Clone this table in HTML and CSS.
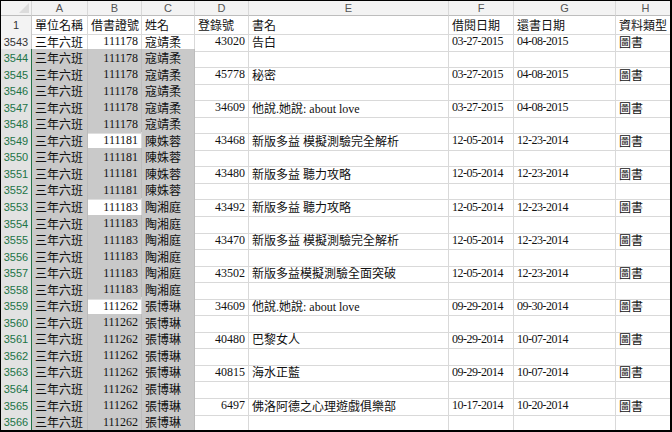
FILE: index.html
```html
<!DOCTYPE html>
<html lang="zh-Hant">
<head>
<meta charset="utf-8">
<title>Sheet</title>
<link rel="stylesheet" href="styles.css">
</head>
<body>
<div class="sheet">
  <div class="row colhead">
    <div class="corner"><span class="tri"></span></div>
    <div class="ch">A</div><div class="ch">B</div><div class="ch">C</div><div class="ch">D</div><div class="ch">E</div><div class="ch">F</div><div class="ch">G</div><div class="ch">H</div>
  </div>
  <div class="row">
    <div class="rh">1</div>
    <div class="c">單位名稱</div><div class="c">借書證號</div><div class="c">姓名</div><div class="c">登錄號</div><div class="c">書名</div><div class="c">借閱日期</div><div class="c">還書日期</div><div class="c">資料類型</div>
  </div>
  <div class="row">
    <div class="rh">3543</div>
    <div class="c">三年六班</div><div class="c n">111178</div><div class="c">寇靖柔</div><div class="c n">43020</div><div class="c">告白</div><div class="c d">03-27-2015</div><div class="c d">04-08-2015</div><div class="c">圖書</div>
  </div>
  <div class="row sel">
    <div class="rh">3544</div>
    <div class="c s">三年六班</div><div class="c n s">111178</div><div class="c s">寇靖柔</div><div class="c n"></div><div class="c"></div><div class="c d"></div><div class="c d"></div><div class="c"></div>
  </div>
  <div class="row sel">
    <div class="rh">3545</div>
    <div class="c s">三年六班</div><div class="c n s">111178</div><div class="c s">寇靖柔</div><div class="c n">45778</div><div class="c">秘密</div><div class="c d">03-27-2015</div><div class="c d">04-08-2015</div><div class="c">圖書</div>
  </div>
  <div class="row sel">
    <div class="rh">3546</div>
    <div class="c s">三年六班</div><div class="c n s">111178</div><div class="c s">寇靖柔</div><div class="c n"></div><div class="c"></div><div class="c d"></div><div class="c d"></div><div class="c"></div>
  </div>
  <div class="row sel">
    <div class="rh">3547</div>
    <div class="c s">三年六班</div><div class="c n s">111178</div><div class="c s">寇靖柔</div><div class="c n">34609</div><div class="c">他說.她說: about love</div><div class="c d">03-27-2015</div><div class="c d">04-08-2015</div><div class="c">圖書</div>
  </div>
  <div class="row sel">
    <div class="rh">3548</div>
    <div class="c s">三年六班</div><div class="c n s">111178</div><div class="c s">寇靖柔</div><div class="c n"></div><div class="c"></div><div class="c d"></div><div class="c d"></div><div class="c"></div>
  </div>
  <div class="row sel">
    <div class="rh">3549</div>
    <div class="c s">三年六班</div><div class="c n">111181</div><div class="c s">陳姝蓉</div><div class="c n">43468</div><div class="c">新版多益 模擬測驗完全解析</div><div class="c d">12-05-2014</div><div class="c d">12-23-2014</div><div class="c">圖書</div>
  </div>
  <div class="row sel">
    <div class="rh">3550</div>
    <div class="c s">三年六班</div><div class="c n s">111181</div><div class="c s">陳姝蓉</div><div class="c n"></div><div class="c"></div><div class="c d"></div><div class="c d"></div><div class="c"></div>
  </div>
  <div class="row sel">
    <div class="rh">3551</div>
    <div class="c s">三年六班</div><div class="c n s">111181</div><div class="c s">陳姝蓉</div><div class="c n">43480</div><div class="c">新版多益 聽力攻略</div><div class="c d">12-05-2014</div><div class="c d">12-23-2014</div><div class="c">圖書</div>
  </div>
  <div class="row sel">
    <div class="rh">3552</div>
    <div class="c s">三年六班</div><div class="c n s">111181</div><div class="c s">陳姝蓉</div><div class="c n"></div><div class="c"></div><div class="c d"></div><div class="c d"></div><div class="c"></div>
  </div>
  <div class="row sel">
    <div class="rh">3553</div>
    <div class="c s">三年六班</div><div class="c n">111183</div><div class="c s">陶湘庭</div><div class="c n">43492</div><div class="c">新版多益 聽力攻略</div><div class="c d">12-05-2014</div><div class="c d">12-23-2014</div><div class="c">圖書</div>
  </div>
  <div class="row sel">
    <div class="rh">3554</div>
    <div class="c s">三年六班</div><div class="c n s">111183</div><div class="c s">陶湘庭</div><div class="c n"></div><div class="c"></div><div class="c d"></div><div class="c d"></div><div class="c"></div>
  </div>
  <div class="row sel">
    <div class="rh">3555</div>
    <div class="c s">三年六班</div><div class="c n s">111183</div><div class="c s">陶湘庭</div><div class="c n">43470</div><div class="c">新版多益 模擬測驗完全解析</div><div class="c d">12-05-2014</div><div class="c d">12-23-2014</div><div class="c">圖書</div>
  </div>
  <div class="row sel">
    <div class="rh">3556</div>
    <div class="c s">三年六班</div><div class="c n s">111183</div><div class="c s">陶湘庭</div><div class="c n"></div><div class="c"></div><div class="c d"></div><div class="c d"></div><div class="c"></div>
  </div>
  <div class="row sel">
    <div class="rh">3557</div>
    <div class="c s">三年六班</div><div class="c n s">111183</div><div class="c s">陶湘庭</div><div class="c n">43502</div><div class="c">新版多益模擬測驗全面突破</div><div class="c d">12-05-2014</div><div class="c d">12-23-2014</div><div class="c">圖書</div>
  </div>
  <div class="row sel">
    <div class="rh">3558</div>
    <div class="c s">三年六班</div><div class="c n s">111183</div><div class="c s">陶湘庭</div><div class="c n"></div><div class="c"></div><div class="c d"></div><div class="c d"></div><div class="c"></div>
  </div>
  <div class="row sel">
    <div class="rh">3559</div>
    <div class="c s">三年六班</div><div class="c n">111262</div><div class="c s">張博琳</div><div class="c n">34609</div><div class="c">他說.她說: about love</div><div class="c d">09-29-2014</div><div class="c d">09-30-2014</div><div class="c">圖書</div>
  </div>
  <div class="row sel">
    <div class="rh">3560</div>
    <div class="c s">三年六班</div><div class="c n s">111262</div><div class="c s">張博琳</div><div class="c n"></div><div class="c"></div><div class="c d"></div><div class="c d"></div><div class="c"></div>
  </div>
  <div class="row sel">
    <div class="rh">3561</div>
    <div class="c s">三年六班</div><div class="c n s">111262</div><div class="c s">張博琳</div><div class="c n">40480</div><div class="c">巴黎女人</div><div class="c d">09-29-2014</div><div class="c d">10-07-2014</div><div class="c">圖書</div>
  </div>
  <div class="row sel">
    <div class="rh">3562</div>
    <div class="c s">三年六班</div><div class="c n s">111262</div><div class="c s">張博琳</div><div class="c n"></div><div class="c"></div><div class="c d"></div><div class="c d"></div><div class="c"></div>
  </div>
  <div class="row sel">
    <div class="rh">3563</div>
    <div class="c s">三年六班</div><div class="c n s">111262</div><div class="c s">張博琳</div><div class="c n">40815</div><div class="c">海水正藍</div><div class="c d">09-29-2014</div><div class="c d">10-07-2014</div><div class="c">圖書</div>
  </div>
  <div class="row sel">
    <div class="rh">3564</div>
    <div class="c s">三年六班</div><div class="c n s">111262</div><div class="c s">張博琳</div><div class="c n"></div><div class="c"></div><div class="c d"></div><div class="c d"></div><div class="c"></div>
  </div>
  <div class="row sel">
    <div class="rh">3565</div>
    <div class="c s">三年六班</div><div class="c n s">111262</div><div class="c s">張博琳</div><div class="c n">6497</div><div class="c">佛洛阿德之心理遊戲俱樂部</div><div class="c d">10-17-2014</div><div class="c d">10-20-2014</div><div class="c">圖書</div>
  </div>
  <div class="row sel">
    <div class="rh">3566</div>
    <div class="c s">三年六班</div><div class="c n s">111262</div><div class="c s">張博琳</div><div class="c n"></div><div class="c"></div><div class="c d"></div><div class="c d"></div><div class="c"></div>
  </div>
</div>
</body>
</html>
```
FILE: styles.css
```css
* { box-sizing: border-box; }
html, body { margin: 0; padding: 0; background: #000; }
body { width: 672px; height: 432px; overflow: hidden; }

.sheet {
  width: 672px;
  height: 432px;
  border-top: 1px solid #000;
  border-left: 1px solid #000;
  border-right: 2px solid #000;
  border-bottom: 2px solid #000;
  background: #fff;
  overflow: hidden;
  display: flex;
  flex-direction: column;
  font-family: "Liberation Serif", "Noto Sans CJK TC", serif;
  font-size: 12px;
  color: #111;
}

.row {
  display: grid;
  grid-template-columns: 31px 56px 54px 53px 54px 200px 65px 102px 60px;
  height: 16.56px;
  flex: none;
}

.colhead { height: 15px; }

.corner {
  background: #f3f3f3;
  border-right: 1px solid #d6d6d6;
  border-bottom: 1px solid #bdbdbd;
  position: relative;
}
.tri {
  position: absolute;
  right: 2px;
  bottom: 2px;
  width: 0;
  height: 0;
  border-left: 10px solid transparent;
  border-bottom: 10px solid #dcdcdc;
}

.ch {
  background: #f3f3f3;
  border-right: 1px solid #d9d9d9;
  border-bottom: 1px solid #bdbdbd;
  display: flex;
  align-items: center;
  justify-content: center;
  font-family: "Liberation Sans", sans-serif;
  font-size: 11px;
  color: #555;
}

.rh {
  background: #f3f3f3;
  border-right: 1px solid #c8c8c8;
  border-bottom: 1px solid #dadada;
  display: flex;
  align-items: center;
  justify-content: center;
  font-family: "Liberation Sans", sans-serif;
  font-size: 11px;
  color: #333;
}

.sel .rh {
  background: #e2e2e2;
  color: #217346;
  border-right: 1px solid #217346;
  border-bottom: 1px solid #ececec;
}

.c {
  border-right: 1px solid #d9d9d9;
  border-bottom: 1px solid #d9d9d9;
  padding: 0 3px;
  display: flex;
  align-items: center;
  white-space: nowrap;
  overflow: visible;
  min-width: 0;
}

.n { justify-content: flex-end; }
.d { letter-spacing: -0.5px; }

.c.s {
  background: #c9c9c9;
  border-bottom-color: #dedede;
  border-right-color: #bcbcbc;
}
```
